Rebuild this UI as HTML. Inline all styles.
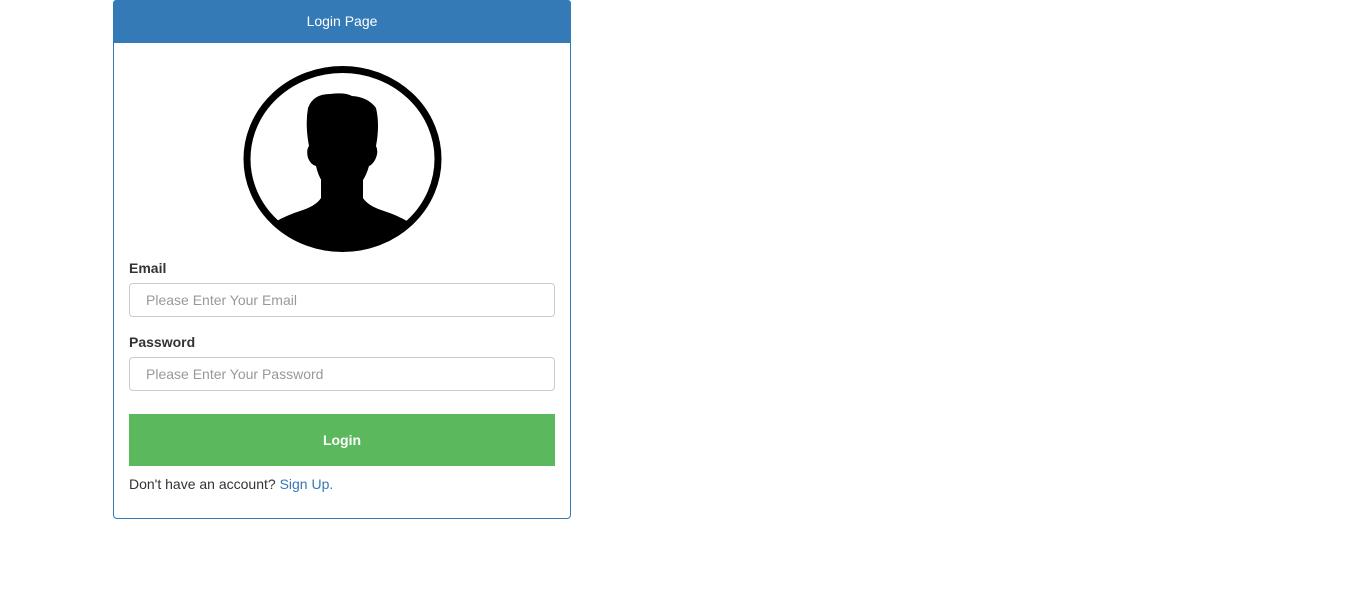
<!DOCTYPE html>
<html><head><meta charset="utf-8"><style>
*{box-sizing:border-box}
body{margin:0;width:1366px;height:607px;background:#fff;font-family:"Liberation Sans",Arial,sans-serif;font-size:14px;color:#333;position:relative;overflow:hidden}
.panel{position:absolute;left:113px;top:0;width:458px;height:519px;border:1px solid #337ab7;border-radius:4px}
.head{position:absolute;left:-1px;top:-1px;width:458px;height:43px;background:#337ab7;color:#fff;text-align:center;line-height:43px;font-size:14px;border-radius:3px 3px 0 0}
.lbl{position:absolute;left:15px;font-weight:bold;color:#333}
.inp{position:absolute;left:15px;width:426px;height:34px;border:1px solid #ccc;border-radius:4px;color:#999;padding-left:16px;line-height:32px}
.btn{position:absolute;left:15px;top:413px;width:426px;height:52px;background:#5cb85c;color:#fff;text-align:center;line-height:52px;font-weight:bold}
.txt{position:absolute;left:15px;top:475px}
a{color:#337ab7;text-decoration:none}
svg{position:absolute;left:0;top:0}
</style></head><body>
<div class="panel">
<div class="head">Login Page</div>
<div class="lbl" style="top:259px">Email</div>
<div class="inp" style="top:282px">Please Enter Your Email</div>
<div class="lbl" style="top:333px">Password</div>
<div class="inp" style="top:356px">Please Enter Your Password</div>
<div class="btn">Login</div>
<div class="txt">Don't have an account? <a href="#">Sign Up.</a></div>
</div>
<svg width="600" height="300" viewBox="0 0 600 300">
<defs><clipPath id="c"><ellipse cx="342.5" cy="159" rx="93" ry="87"/></clipPath></defs>
<g clip-path="url(#c)">
<path d="M321 180 L321 198 Q316 206 300 211 Q272 220 250 240 L250 260 L440 260 L432 240 Q412 220 384 211 Q368 206 363 198 L363 180 Z" fill="#000"/>
</g>
<path d="M309 146 Q305 125 308 108 Q313 94 330 94 Q345 92 352 96 Q368 97 376 108 Q380 125 376 146 Q379 152 375 160 Q372 165 369 166 Q364 184 352 191 Q342 197 332 191 Q320 184 316 166 Q311 165 308 158 Q306 150 309 146 Z" fill="#000"/>
<ellipse cx="342.5" cy="159" rx="95.5" ry="89.5" fill="none" stroke="#000" stroke-width="7"/>
</svg>
</body></html>
